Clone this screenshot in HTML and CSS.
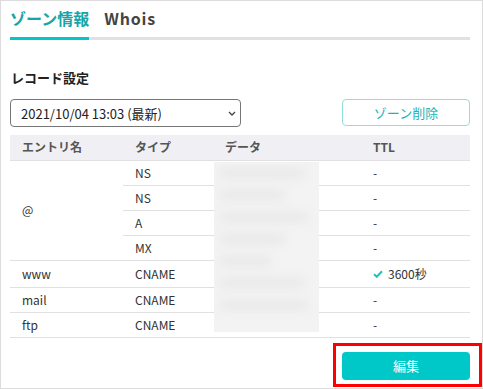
FILE: index.html
```html
<!DOCTYPE html>
<html lang="ja">
<head>
    <meta charset="UTF-8">
    <meta name="viewport" content="width=device-width, initial-scale=1.0">
    <title>ゾーン情報</title>
    <link rel="stylesheet" href="styles.css">
</head>
<body>
    <div class="frame">
        <div class="tabs">
            <div class="tab active">ゾーン情報</div>
            <div class="tab">Whois</div>
        </div>

        <h2 class="section-title">レコード設定</h2>

        <div class="toolbar">
            <div class="select-wrap">
                <select class="history">
                    <option>2021/10/04 13:03 (最新)</option>
                </select>
                <svg class="chevron" width="8" height="5" viewBox="0 0 8 5">
                    <path d="M1 1 L4 4 L7 1" fill="none" stroke="#444" stroke-width="1.3"/>
                </svg>
            </div>
            <button class="btn-outline">ゾーン削除</button>
        </div>

        <div class="table-wrap">
            <table class="records">
                <thead>
                    <tr>
                        <th class="col-name">エントリ名</th>
                        <th class="col-type">タイプ</th>
                        <th class="col-data">データ</th>
                        <th class="col-ttl">TTL</th>
                    </tr>
                </thead>
                <tbody>
                    <tr>
                        <td rowspan="4">@</td>
                        <td>NS</td>
                        <td></td>
                        <td>-</td>
                    </tr>
                    <tr>
                        <td>NS</td>
                        <td></td>
                        <td>-</td>
                    </tr>
                    <tr>
                        <td>A</td>
                        <td></td>
                        <td>-</td>
                    </tr>
                    <tr>
                        <td>MX</td>
                        <td></td>
                        <td>-</td>
                    </tr>
                    <tr class="tall">
                        <td>www</td>
                        <td>CNAME</td>
                        <td></td>
                        <td>
                            <span class="ttl-set">
                                <svg width="10" height="8" viewBox="0 0 10 8">
                                    <path d="M1 4.2 L3.8 6.8 L9 1.2" fill="none" stroke="#1cc3c3" stroke-width="2"/>
                                </svg>
                                3600秒
                            </span>
                        </td>
                    </tr>
                    <tr>
                        <td>mail</td>
                        <td>CNAME</td>
                        <td></td>
                        <td>-</td>
                    </tr>
                    <tr>
                        <td>ftp</td>
                        <td>CNAME</td>
                        <td></td>
                        <td>-</td>
                    </tr>
                </tbody>
            </table>
            <!-- データ列はマスク -->
            <div class="mask">
                <div class="mask-bar w1"></div>
                <div class="mask-bar w2"></div>
                <div class="mask-bar w3"></div>
                <div class="mask-bar w2"></div>
                <div class="mask-bar w4"></div>
                <div class="mask-bar w1"></div>
                <div class="mask-bar w3"></div>
            </div>
        </div>

        <div class="footer">
            <div class="highlight">
                <button class="btn-primary">編集</button>
            </div>
        </div>
    </div>
</body>
</html>
```

FILE: styles.css
```css
* {
    box-sizing: border-box;
}
body {
    margin: 0;
    font-family: "Noto Sans CJK JP", sans-serif;
    color: #333;
    background-color: white;
}
.frame {
    width: 483px;
    height: 389px;
    border: 1px solid #dcdcdc;
    padding: 5px 12px 0 9px;
}
.tabs {
    display: flex;
    gap: 15px;
    border-bottom: 3px solid #e1e1e5;
}
.tab {
    font-size: 16px;
    font-weight: bold;
    line-height: 24px;
    padding-bottom: 7px;
    color: #444;
}
.tab.active {
    color: #16a6a8;
    border-bottom: 3px solid #00c8c8;
    margin-bottom: -3px;
}
.tab + .tab {
    letter-spacing: 0.8px;
}
.section-title {
    font-size: 13px;
    font-weight: bold;
    line-height: 20px;
    margin: 28px 0 11px 1px;
    color: #222;
}
.toolbar {
    display: flex;
    justify-content: space-between;
    align-items: flex-start;
}
.select-wrap {
    position: relative;
    width: 231px;
}
.history {
    appearance: none;
    width: 100%;
    height: 28px;
    padding: 0 10px;
    font-family: inherit;
    font-size: 13px;
    color: #222;
    border: 1px solid #767676;
    border-radius: 4px;
    background-color: white;
}
.chevron {
    position: absolute;
    right: 5px;
    top: 12px;
}
.btn-outline {
    width: 128px;
    height: 27px;
    font-family: inherit;
    font-size: 13px;
    color: #1ab6b8;
    background-color: white;
    border: 1px solid #8fe0dd;
    border-radius: 4px;
}
.table-wrap {
    position: relative;
    margin-top: 8px;
}
.records {
    width: 100%;
    border-collapse: collapse;
    font-size: 12px;
    table-layout: fixed;
}
.records th {
    background-color: #f0f0f4;
    font-weight: bold;
    color: #555;
    text-align: left;
    height: 25px;
    padding: 0 12px 1px;
    border-bottom: 1px solid #e0e0e0;
}
.records td {
    height: 25px;
    padding: 0 12px 1px;
    border-bottom: 1px solid #e0e0e0;
    color: #333;
}
.records tr.tall td {
    height: 27px;
}
.col-name {
    width: 113px;
}
.col-type {
    width: 90px;
}
.col-data {
    width: 148px;
}
.ttl-set {
    display: inline-flex;
    align-items: center;
    gap: 5px;
}
.mask {
    position: absolute;
    left: 204px;
    top: 27px;
    width: 105px;
    height: 170px;
    background-color: #f3f3f3;
    padding: 6px 6px;
    display: flex;
    flex-direction: column;
    gap: 12px;
    overflow: hidden;
}
.mask-bar {
    height: 10px;
    background-color: #e9e9e9;
    filter: blur(5px);
}
.mask-bar.w1 { width: 90%; }
.mask-bar.w2 { width: 70%; }
.mask-bar.w3 { width: 95%; }
.mask-bar.w4 { width: 55%; }
.footer {
    display: flex;
    justify-content: flex-end;
    margin-top: 5px;
}
.highlight {
    border: 3px solid #ff0000;
    padding: 6px 9px 4px 6px;
    margin-right: -12px;
}
.btn-primary {
    display: block;
    width: 128px;
    height: 28px;
    font-family: inherit;
    font-size: 13px;
    color: white;
    background-color: #00c8c8;
    border: none;
    border-radius: 4px;
}
```
